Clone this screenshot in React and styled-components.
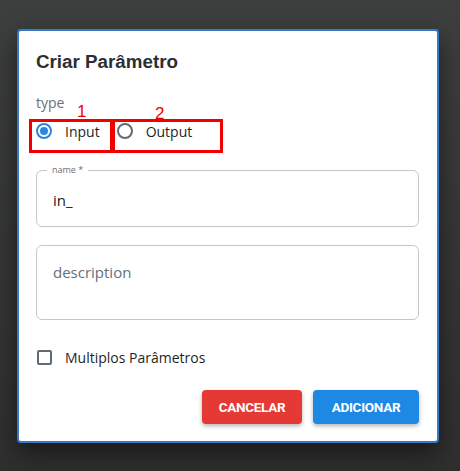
import React from "react";
import styled, { createGlobalStyle } from "styled-components";

const Global = createGlobalStyle`
  html, body { margin: 0; padding: 0; }
  body {
    background: linear-gradient(#3d3e3e, #2f2f2f);
    font-family: "Open Sans", "Noto Sans", Arial, sans-serif;
  }
`;

const Backdrop = styled.div`
  min-height: 471px;
  box-sizing: border-box;
  padding: 29px 21px 0 17px;
`;

const Dialog = styled.div`
  position: relative;
  width: 422px;
  height: 414px;
  box-sizing: border-box;
  background: #fff;
  border: 2px solid #3679c4;
  border-radius: 4px;
  box-shadow: 0 10px 24px rgba(0, 0, 0, 0.5);
  padding: 19px 18px 0 17px;
  display: flex;
  flex-direction: column;
`;

const Title = styled.h2`
  margin: 0;
  font-family: "Liberation Sans", Arial, sans-serif;
  font-weight: 700;
  font-size: 18.8px;
  line-height: 24px;
  color: #2b2f33;
`;

const GroupLabel = styled.div`
  margin-top: 20px;
  font-size: 14px;
  line-height: 18px;
  color: #6b7075;
`;

const RadioRow = styled.div`
  display: flex;
  align-items: center;
  height: 30px;
  margin-top: 4px;
`;

const RadioItem = styled.label`
  display: flex;
  align-items: center;
  gap: 13px;
  margin-right: 17px;
  font-size: 14px;
  color: #1f1f1f;
`;

const RadioCircle = styled.span`
  width: 16px;
  height: 16px;
  box-sizing: border-box;
  border-radius: 50%;
  border: 2px solid ${(p) => (p.$checked ? "#2a86e0" : "#5f6b75")};
  display: flex;
  align-items: center;
  justify-content: center;
  &::after {
    content: "";
    width: 8px;
    height: 8px;
    border-radius: 50%;
    background: ${(p) => (p.$checked ? "#2a86e0" : "transparent")};
  }
`;

const Field = styled.div`
  position: relative;
  margin-top: ${(p) => p.$mt}px;
  padding: 0 16px;
  height: ${(p) => p.$h}px;
  box-sizing: border-box;
  border: 1px solid #c4c8cc;
  border-radius: 6px;
  display: flex;
  align-items: ${(p) => (p.$top ? "flex-start" : "center")};
`;

const FloatLabel = styled.span`
  position: absolute;
  top: -6px;
  left: 10px;
  padding: 0 5px;
  background: #fff;
  font-size: 9px;
  line-height: 10px;
  color: #6b7075;
`;

const Value = styled.span`
  font-size: 15px;
  line-height: 20px;
  color: #222;
  margin-top: 2px;
`;

const Placeholder = styled.span`
  font-size: 15px;
  line-height: 20px;
  color: #66707a;
  margin-top: 16px;
`;

const CheckRow = styled.label`
  display: flex;
  align-items: center;
  gap: 13px;
  height: 19px;
  margin-top: 28px;
  font-size: 14px;
  color: #1f1f1f;
`;

const Box = styled.span`
  width: 15px;
  height: 15px;
  box-sizing: border-box;
  border: 2px solid #5f6b75;
  border-radius: 2px;
  margin-left: 1px;
`;

const Actions = styled.div`
  display: flex;
  justify-content: flex-end;
  gap: 11px;
  margin-top: 23px;
`;

const Button = styled.button`
  height: 34px;
  width: ${(p) => p.$w}px;
  border: none;
  border-radius: 4px;
  background: ${(p) => p.$bg};
  color: #fff;
  font-family: Roboto, "Liberation Sans", Arial, sans-serif;
  font-weight: 700;
  font-size: 13.5px;
  letter-spacing: -0.3px;
  text-transform: uppercase;
  box-shadow: 0 2px 4px rgba(0, 0, 0, 0.3);
`;

const Annot = styled.div`
  position: absolute;
  top: ${(p) => p.$y}px;
  left: ${(p) => p.$x}px;
  width: ${(p) => p.$w}px;
  height: 34px;
  box-sizing: border-box;
  border: 3px solid #f20000;
`;

const AnnotNum = styled.span`
  position: absolute;
  top: ${(p) => p.$y}px;
  left: ${(p) => p.$x}px;
  font-family: "Liberation Sans", Arial, sans-serif;
  font-size: 17px;
  line-height: 17px;
  color: #f20000;
`;

export default function App() {
  return (
    <>
      <Global />
      <Backdrop>
        <Dialog>
          <Title>Criar Parâmetro</Title>
          <GroupLabel>type</GroupLabel>
          <RadioRow>
            <RadioItem>
              <RadioCircle $checked />
              Input
            </RadioItem>
            <RadioItem>
              <RadioCircle />
              Output
            </RadioItem>
          </RadioRow>
          <Field $mt={24} $h={57}>
            <FloatLabel>name *</FloatLabel>
            <Value>in_</Value>
          </Field>
          <Field $mt={18} $h={75} $top>
            <Placeholder>description</Placeholder>
          </Field>
          <CheckRow>
            <Box />
            Multiplos Parâmetros
          </CheckRow>
          <Actions>
            <Button $bg="#e53935" $w={100}>Cancelar</Button>
            <Button $bg="#1e88e5" $w={106}>Adicionar</Button>
          </Actions>
          <Annot $x={10} $y={88} $w={84} />
          <Annot $x={93} $y={88} $w={111} />
          <AnnotNum $x={58} $y={72}>1</AnnotNum>
          <AnnotNum $x={136} $y={74}>2</AnnotNum>
        </Dialog>
      </Backdrop>
    </>
  );
}
